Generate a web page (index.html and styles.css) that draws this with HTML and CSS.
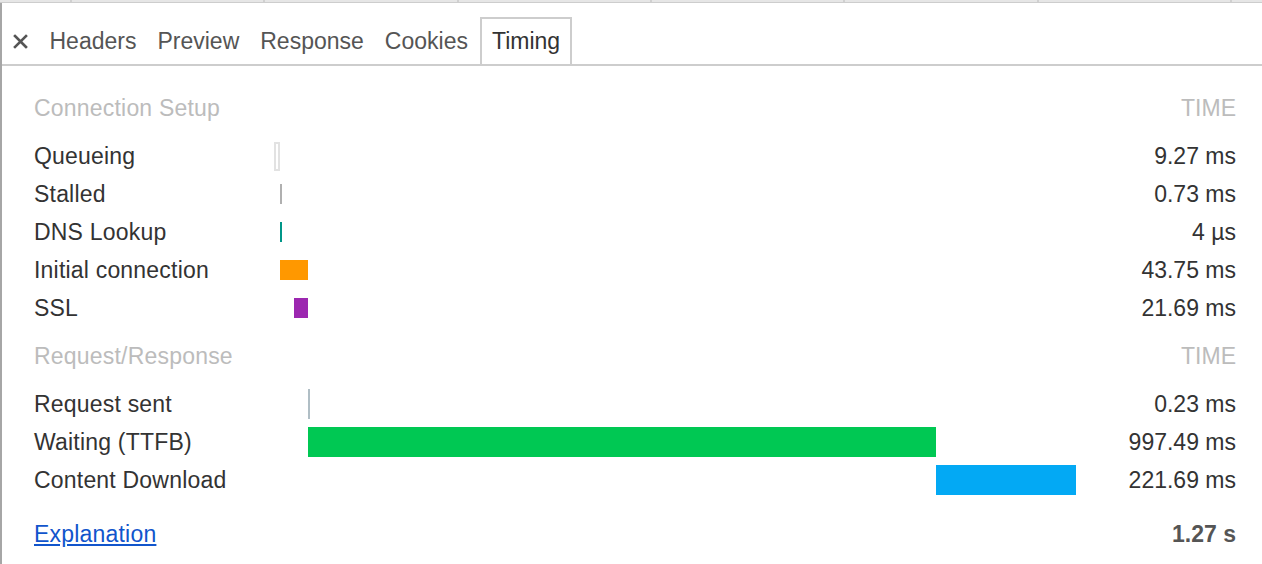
FILE: index.html
```html
<!DOCTYPE html>
<html>
<head>
<meta charset="utf-8">
<link rel="stylesheet" href="styles.css">
</head>
<body>
<div class="devtools">
  <div class="grid-strip"></div>
  <div class="panel">
    <div class="tabbar">
      <span class="close">
        <svg width="15" height="15" viewBox="0 0 15 15"><path d="M2 2 L13 13 M13 2 L2 13" stroke="#555" stroke-width="2.6" stroke-linecap="square"/></svg>
      </span>
      <div class="tab">Headers</div>
      <div class="tab">Preview</div>
      <div class="tab">Response</div>
      <div class="tab">Cookies</div>
      <div class="tab active">Timing</div>
    </div>
    <div class="timing">
      <div class="row header"><span class="label">Connection Setup</span><span class="track"></span><span class="value">TIME</span></div>
      <div class="row"><span class="label">Queueing</span><span class="track"><i class="bar queueing" style="margin-left:0%;width:0.75%"></i></span><span class="value">9.27 ms</span></div>
      <div class="row"><span class="label">Stalled</span><span class="track"><i class="bar stalled" style="margin-left:0.75%;width:0.25%"></i></span><span class="value">0.73 ms</span></div>
      <div class="row"><span class="label">DNS Lookup</span><span class="track"><i class="bar dns" style="margin-left:0.75%;width:0.25%"></i></span><span class="value">4 µs</span></div>
      <div class="row"><span class="label">Initial connection</span><span class="track"><i class="bar connecting" style="margin-left:0.75%;width:3.49%"></i></span><span class="value">43.75 ms</span></div>
      <div class="row"><span class="label">SSL</span><span class="track"><i class="bar ssl" style="margin-left:2.49%;width:1.75%"></i></span><span class="value">21.69 ms</span></div>
      <div class="row header"><span class="label">Request/Response</span><span class="track"></span><span class="value">TIME</span></div>
      <div class="row"><span class="label">Request sent</span><span class="track"><i class="bar tall sending" style="margin-left:4.24%;width:0.25%"></i></span><span class="value">0.23 ms</span></div>
      <div class="row"><span class="label">Waiting (TTFB)</span><span class="track"><i class="bar tall waiting" style="margin-left:4.24%;width:78.3%"></i></span><span class="value">997.49 ms</span></div>
      <div class="row"><span class="label">Content Download</span><span class="track"><i class="bar tall receiving" style="margin-left:82.54%;width:17.46%"></i></span><span class="value">221.69 ms</span></div>
      <div class="row footer"><span class="label"><a href="#" class="link">Explanation</a></span><span class="track"></span><span class="value total">1.27 s</span></div>
    </div>
  </div>
</div>
</body>
</html>
```

FILE: styles.css
```css
html, body {
  margin: 0;
  padding: 0;
  background: #fff;
}
body {
  width: 1262px;
  height: 564px;
  overflow: hidden;
  font-family: "Liberation Sans", Arial, sans-serif;
  font-size: 23px;
  color: #333;
}
.devtools {
  display: flex;
  flex-direction: column;
  height: 564px;
}
.grid-strip {
  height: 2px;
  border-bottom: 1px solid #cdcdcd;
  background-color: #e6e6e6;
  background-image: repeating-linear-gradient(90deg, transparent 0 70px, #d0d0d0 70px 72px, transparent 72px 193.3px);
}
.panel {
  flex: 1;
  border-left: 2px solid #a6a6a6;
  display: flex;
  flex-direction: column;
}
.tabbar {
  display: flex;
  align-items: flex-end;
  height: 61px;
  border-bottom: 2px solid #cdcdcd;
  padding-left: 11px;
}
.close {
  display: flex;
  align-items: center;
  width: 15px;
  height: 45px;
  margin-right: 11px;
}
.close svg { display: block; }
.tab {
  height: 45px;
  line-height: 45px;
  padding: 0 8.5px;
  border: 2px solid transparent;
  border-bottom: 0;
  color: #555;
  white-space: nowrap;
}
.tab.active {
  border-color: #cdcdcd;
  color: #333;
  margin-left: 2px;
  padding: 0 9.5px;
}
.timing {
  padding: 13px 26px 0 32px;
  display: flex;
  flex-direction: column;
}
.row {
  display: grid;
  grid-template-columns: 240px 802px 160px;
  height: 38px;
  align-items: center;
}
.row.header {
  margin: 10px 0;
  color: #bcbcbc;
}
.row.footer {
  margin-top: 16px;
}
.label {
  white-space: nowrap;
  letter-spacing: 0.2px;
}
.value {
  text-align: right;
  white-space: nowrap;
}
.track {
  display: flex;
  align-items: center;
  height: 38px;
}
.bar {
  display: block;
  height: 20px;
  min-width: 2px;
  box-sizing: border-box;
}
.bar.tall { height: 30px; }
.bar.queueing {
  height: 29px;
  border: 2px solid #e2e2e2;
  background: #fff;
}
.bar.stalled { background: #b0b0b0; }
.bar.dns { background: #009688; }
.bar.connecting { background: #ff9800; }
.bar.ssl { background: #9c27b0; }
.bar.sending { background: #b0bec5; }
.bar.waiting { background: #00c853; }
.bar.receiving { background: #03a9f4; }
.link {
  color: #1155cc;
  text-decoration: underline;
}
.total {
  font-weight: bold;
  color: #555;
}
```
